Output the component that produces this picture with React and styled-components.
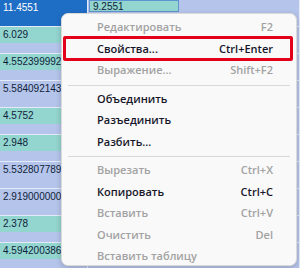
import React from 'react';
import styled, { createGlobalStyle } from 'styled-components';

const GlobalStyle = createGlobalStyle`
  html, body {
    margin: 0;
    padding: 0;
    background: #b5c4ea;
  }
  #root {
    width: 300px;
    height: 268px;
    overflow: hidden;
  }
`;

const Screen = styled.div`
  position: relative;
  width: 300px;
  height: 268px;
  overflow: hidden;
  background: #b5c4ea;
`;

const Grid = styled.div`
  display: flex;
  flex-direction: column;
`;

const Row = styled.div`
  display: flex;
  height: 26px;
  border-bottom: 1px solid #e4eaf7;
`;

const Cell = styled.div`
  width: ${p => p.width}px;
  flex: ${p => (p.width ? 'none' : '1')};
  border-right: 1px solid #e4eaf7;
  background: ${p => (p.selected ? '#1f6ec6' : 'transparent')};
`;

const Band = styled.div`
  height: ${p => p.h || 16}px;
  line-height: ${p => p.h || 16}px;
  padding-left: 3px;
  font-family: "Liberation Sans", Arial, sans-serif;
  font-size: 10px;
  white-space: nowrap;
  overflow: hidden;
  color: ${p => (p.selected ? '#ffffff' : '#0e1f3a')};
  background: ${p => (p.selected ? 'transparent' : p.tone === 'plain' ? 'transparent' : '#93d5cf')};
  box-sizing: border-box;
  border: ${p => (p.boxed ? '1px solid #5f93cf' : 'none')};
  margin-left: ${p => (p.boxed ? '1px' : '0')};
  width: ${p => (p.boxed ? '90px' : 'auto')};
`;

const Menu = styled.div`
  position: absolute;
  left: 61px;
  top: 13px;
  width: 236px;
  height: 253px;
  box-sizing: border-box;
  padding-top: 2px;
  background: #f9f9f9;
  border: 1px solid #dadada;
  border-radius: 7px;
  box-shadow: 0 2px 6px rgba(0, 0, 0, 0.18);
  font-family: "Open Sans", "Noto Sans", sans-serif;
  font-size: 11px;
  font-weight: 600;
`;

const Item = styled.div`
  position: relative;
  display: flex;
  align-items: center;
  justify-content: space-between;
  height: 21.5px;
  padding: 0 23px 0 35px;
  color: ${p => (p.disabled ? '#a2a2a2' : '#16162a')};

  ${p => p.marked && `
    &::after {
      content: '';
      position: absolute;
      left: 1px;
      right: 3px;
      top: -2px;
      bottom: -2px;
      border: 3px solid #e3001b;
      border-radius: 2px;
    }
  `}
`;

const Shortcut = styled.span`
  white-space: nowrap;
`;

const Separator = styled.div`
  height: 1px;
  margin: 4px 6px 2px 6px;
  background: #d8d8d8;
`;

const rows = [
  { v: '6.029', tone: 'teal' },
  { v: '4.552399992', tone: 'teal' },
  { v: '5.584092143', tone: 'plain' },
  { v: '4.5752', tone: 'teal' },
  { v: '2.948', tone: 'teal' },
  { v: '5.532807789', tone: 'plain' },
  { v: '2.919000000', tone: 'plain' },
  { v: '2.378', tone: 'teal' },
  { v: '4.594200386', tone: 'teal' },
];

const groups = [
  [
    { label: 'Редактировать', key: 'F2', disabled: true },
    { label: 'Свойства...', key: 'Ctrl+Enter', marked: true },
    { label: 'Выражение...', key: 'Shift+F2', disabled: true },
  ],
  [
    { label: 'Объединить' },
    { label: 'Разъединить' },
    { label: 'Разбить...' },
  ],
  [
    { label: 'Вырезать', key: 'Ctrl+X', disabled: true },
    { label: 'Копировать', key: 'Ctrl+C' },
    { label: 'Вставить', key: 'Ctrl+V', disabled: true },
    { label: 'Очистить', key: 'Del', disabled: true },
    { label: 'Вставить таблицу', disabled: true },
  ],
];

export default function App() {
  return (
    <Screen>
      <GlobalStyle />
      <Grid>
        <Row>
          <Cell width={87} selected>
            <Band selected>11.4551</Band>
          </Cell>
          <Cell>
            <Band boxed h={12}>9.2551</Band>
          </Cell>
        </Row>
        {rows.map(r => (
          <Row key={r.v}>
            <Cell width={87}>
              <Band tone={r.tone}>{r.v}</Band>
            </Cell>
            <Cell />
          </Row>
        ))}
      </Grid>

      <Menu>
        {groups.map((g, i) => (
          <React.Fragment key={i}>
            {i > 0 && <Separator />}
            {g.map(it => (
              <Item key={it.label} disabled={it.disabled} marked={it.marked}>
                <span>{it.label}</span>
                {it.key && <Shortcut>{it.key}</Shortcut>}
              </Item>
            ))}
          </React.Fragment>
        ))}
      </Menu>
    </Screen>
  );
}
